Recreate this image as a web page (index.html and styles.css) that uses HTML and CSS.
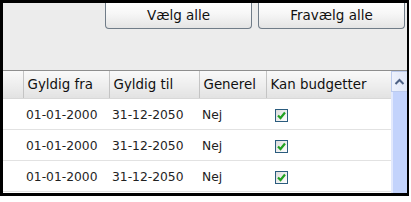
FILE: index.html
```html
<!DOCTYPE html>
<html lang="da">
	<head>
		<meta charset="utf-8">
		<title>Gyldighed</title>
		<link rel="stylesheet" href="styles.css">
	</head>
	<body>
		<div class="frame">
			<div class="toolbar">
				<button class="tool-button">Vælg alle</button>
				<button class="tool-button">Fravælg alle</button>
			</div>
			<div class="grid">
				<div class="grid-main">
					<table class="grid-table">
						<colgroup>
							<col class="c-sel">
							<col class="c-fra">
							<col class="c-til">
							<col class="c-gen">
							<col class="c-bud">
						</colgroup>
						<thead>
							<tr>
								<th></th>
								<th>Gyldig fra</th>
								<th>Gyldig til</th>
								<th>Generel</th>
								<th>Kan budgetter</th>
							</tr>
						</thead>
						<tbody>
							<tr>
								<td></td>
								<td>01-01-2000</td>
								<td>31-12-2050</td>
								<td>Nej</td>
								<td><span class="check"><svg width="11" height="11" viewBox="0 0 11 11"><path d="M2 5.5 L4.5 8 L9 2.5" fill="none" stroke="#21a121" stroke-width="2.2"/></svg></span></td>
							</tr>
							<tr>
								<td></td>
								<td>01-01-2000</td>
								<td>31-12-2050</td>
								<td>Nej</td>
								<td><span class="check"><svg width="11" height="11" viewBox="0 0 11 11"><path d="M2 5.5 L4.5 8 L9 2.5" fill="none" stroke="#21a121" stroke-width="2.2"/></svg></span></td>
							</tr>
							<tr>
								<td></td>
								<td>01-01-2000</td>
								<td>31-12-2050</td>
								<td>Nej</td>
								<td><span class="check"><svg width="11" height="11" viewBox="0 0 11 11"><path d="M2 5.5 L4.5 8 L9 2.5" fill="none" stroke="#21a121" stroke-width="2.2"/></svg></span></td>
							</tr>
						</tbody>
					</table>
				</div>
				<div class="scrollbar">
					<div class="scroll-up"><svg width="11" height="8" viewBox="0 0 11 8"><path d="M1.5 6 L5.5 2 L9.5 6" fill="none" stroke="#4d6185" stroke-width="2"/></svg></div>
					<div class="scroll-track"></div>
				</div>
			</div>
		</div>
	</body>
</html>
```

FILE: styles.css
```css
body {
	margin: 0;
	padding: 0;
	background-color: #fff;
	font-family: "DejaVu Sans", Verdana, sans-serif;
	font-size: 12px;
}
.frame {
	width: 404px;
	height: 190px;
	border-top: 3px solid #000;
	border-left: 3px solid #000;
	border-right: 2px solid #000;
	border-bottom: 3px solid #000;
	background-color: #ececec;
	display: flex;
	flex-direction: column;
	overflow: hidden;
}
.toolbar {
	height: 67px;
	display: flex;
	justify-content: flex-end;
	align-items: flex-start;
	gap: 6px;
	padding-right: 2px;
	border-bottom: 1px solid #8e8e8e;
	flex-shrink: 0;
}
.tool-button {
	width: 147px;
	height: 26px;
	margin: 0;
	padding: 0 0 2px 0;
	font-family: "DejaVu Sans", Verdana, sans-serif;
	font-size: 13.5px;
	font-weight: normal;
	color: #111;
	border: 1px solid #707c88;
	border-top: none;
	border-radius: 0 0 4px 4px;
	background: linear-gradient(#ffffff, #f6f6f6 45%, #e4e4e4);
}
.grid {
	flex: 1;
	display: flex;
	background-color: #fff;
	min-height: 0;
}
.grid-main {
	flex: 1;
}
.grid-table {
	width: 388px;
	border-collapse: collapse;
	table-layout: fixed;
}
.c-sel { width: 20px; }
.c-fra { width: 86px; }
.c-til { width: 90px; }
.c-gen { width: 67px; }
.c-bud { width: 125px; }
th {
	height: 27px;
	padding: 0 0 0 4px;
	text-align: left;
	font-weight: normal;
	font-size: 13.4px;
	color: #111;
	white-space: nowrap;
	overflow: hidden;
	background: linear-gradient(#f9f9f9, #ececec 60%, #e2e2e2);
	border-right: 1px solid #c4c4c4;
	border-bottom: 1px solid #d8d8d8;
}
th:last-child {
	border-right: none;
}
td {
	height: 28px;
	padding: 2px 0 0 3px;
	font-size: 12.3px;
	color: #222;
	white-space: nowrap;
	border-bottom: 1px solid #e2e2e2;
}
.check {
	display: inline-block;
	width: 11px;
	height: 11px;
	margin-left: 6px;
	border: 1px solid #2b5c7e;
	background: linear-gradient(135deg, #dcdcdc, #fff);
	vertical-align: middle;
	line-height: 0;
}
.scrollbar {
	width: 17px;
	display: flex;
	flex-direction: column;
	flex-shrink: 0;
}
.scroll-up {
	height: 19px;
	display: flex;
	align-items: center;
	justify-content: center;
	background: linear-gradient(90deg, #eef2fd, #dfe6f7);
	border: 1px solid #bccbee;
}
.scroll-track {
	flex: 1;
	background-color: #c3d3fc;
	border-left: 2px solid #e2e9fd;
}
```
